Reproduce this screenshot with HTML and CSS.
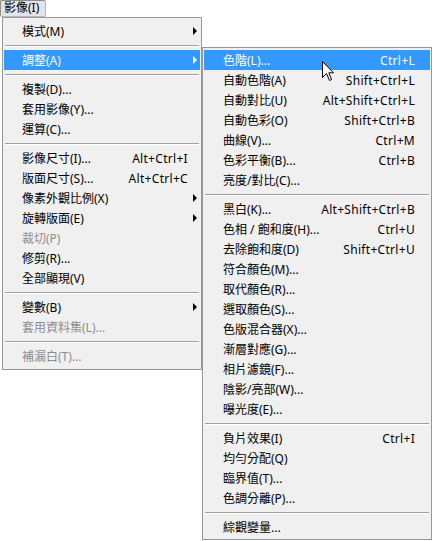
FILE: index.html
```html
<!DOCTYPE html>
<html lang="zh-Hant">
<head>
<meta charset="utf-8">
<title>影像選單</title>
<link rel="stylesheet" href="styles.css">
</head>
<body>
<div class="menubar"><span class="menubtn">影像(I)</span></div>
<div class="menus">
  <div class="menu menu-main">
    <div class="item sub"><span class="lbl">模式(M)</span><span class="key"></span><span class="arr"></span></div>
    <div class="sep"></div>
    <div class="item sub active"><span class="lbl">調整(A)</span><span class="key"></span><span class="arr"></span></div>
    <div class="sep"></div>
    <div class="item"><span class="lbl">複製(D)...</span></div>
    <div class="item"><span class="lbl">套用影像(Y)...</span></div>
    <div class="item"><span class="lbl">運算(C)...</span></div>
    <div class="sep"></div>
    <div class="item"><span class="lbl">影像尺寸(I)...</span><span class="key">Alt+Ctrl+I</span></div>
    <div class="item"><span class="lbl">版面尺寸(S)...</span><span class="key">Alt+Ctrl+C</span></div>
    <div class="item sub"><span class="lbl">像素外觀比例(X)</span><span class="key"></span><span class="arr"></span></div>
    <div class="item sub"><span class="lbl">旋轉版面(E)</span><span class="key"></span><span class="arr"></span></div>
    <div class="item disabled"><span class="lbl">裁切(P)</span></div>
    <div class="item"><span class="lbl">修剪(R)...</span></div>
    <div class="item"><span class="lbl">全部顯現(V)</span></div>
    <div class="sep"></div>
    <div class="item sub"><span class="lbl">變數(B)</span><span class="key"></span><span class="arr"></span></div>
    <div class="item disabled"><span class="lbl">套用資料集(L)...</span></div>
    <div class="sep"></div>
    <div class="item disabled"><span class="lbl">補漏白(T)...</span></div>
  </div>
  <div class="menu menu-sub">
    <div class="item active"><span class="lbl">色階(L)...</span><span class="key">Ctrl+L</span></div>
    <div class="item"><span class="lbl">自動色階(A)</span><span class="key">Shift+Ctrl+L</span></div>
    <div class="item"><span class="lbl">自動對比(U)</span><span class="key">Alt+Shift+Ctrl+L</span></div>
    <div class="item"><span class="lbl">自動色彩(O)</span><span class="key">Shift+Ctrl+B</span></div>
    <div class="item"><span class="lbl">曲線(V)...</span><span class="key">Ctrl+M</span></div>
    <div class="item"><span class="lbl">色彩平衡(B)...</span><span class="key">Ctrl+B</span></div>
    <div class="item"><span class="lbl">亮度/對比(C)...</span></div>
    <div class="sep"></div>
    <div class="item"><span class="lbl">黑白(K)...</span><span class="key">Alt+Shift+Ctrl+B</span></div>
    <div class="item"><span class="lbl">色相 / 飽和度(H)...</span><span class="key">Ctrl+U</span></div>
    <div class="item"><span class="lbl">去除飽和度(D)</span><span class="key">Shift+Ctrl+U</span></div>
    <div class="item"><span class="lbl">符合顏色(M)...</span></div>
    <div class="item"><span class="lbl">取代顏色(R)...</span></div>
    <div class="item"><span class="lbl">選取顏色(S)...</span></div>
    <div class="item"><span class="lbl">色版混合器(X)...</span></div>
    <div class="item"><span class="lbl">漸層對應(G)...</span></div>
    <div class="item"><span class="lbl">相片濾鏡(F)...</span></div>
    <div class="item"><span class="lbl">陰影/亮部(W)...</span></div>
    <div class="item"><span class="lbl">曝光度(E)...</span></div>
    <div class="sep"></div>
    <div class="item"><span class="lbl">負片效果(I)</span><span class="key">Ctrl+I</span></div>
    <div class="item"><span class="lbl">均勻分配(Q)</span></div>
    <div class="item"><span class="lbl">臨界值(T)...</span></div>
    <div class="item"><span class="lbl">色調分離(P)...</span></div>
    <div class="sep"></div>
    <div class="item"><span class="lbl">綜觀變量...</span></div>
  </div>
</div>
<svg class="cursor" width="13" height="21" viewBox="0 0 13 21" aria-hidden="true">
  <path d="M0.5 0.5 L0.5 16.5 L4.5 12.5 L7.5 19.5 L9.5 18.5 L6.8 11.8 L11.5 11.8 Z" fill="#fff" stroke="#000" stroke-width="1" stroke-linejoin="miter"/>
</svg>
</body>
</html>
```

FILE: styles.css
```css
html, body {
  margin: 0;
  padding: 0;
  background: #ffffff;
}

body {
  position: relative;
  width: 432px;
  height: 541px;
  overflow: hidden;
  font-family: "Noto Sans", "Noto Sans CJK TC", sans-serif;
  font-size: 12px;
  color: #000;
}

.menubar {
  height: 17px;
  display: flex;
}

.menubtn {
  box-sizing: border-box;
  width: 46px;
  height: 17px;
  line-height: 14px;
  padding-left: 3px;
  background: #e1e5eb;
  border: 1px solid #8c8c8c;
  border-right-color: #b8b8b8;
  border-bottom-color: #b8b8b8;
  border-radius: 2px;
  white-space: nowrap;
}

.menus {
  display: flex;
  align-items: flex-start;
}

.menu {
  box-sizing: border-box;
  background: #f0f0f0;
  border: 1px solid #979797;
  display: flex;
  flex-direction: column;
}

.menu-main {
  margin-left: 2px;
  width: 200px;
  padding: 3px 1px 3px 1px;
}

.menu-sub {
  margin-top: 30px;
  width: 230px;
  padding: 2px 1px 2px 1px;
}

.item {
  display: flex;
  align-items: center;
  height: 20px;
  white-space: nowrap;
}

.menu-main .item {
  padding-left: 18px;
  padding-right: 12px;
}

.menu-sub .item {
  padding-left: 19px;
  padding-right: 15px;
}

.lbl {
  flex: 1;
}

.key {
  text-align: right;
  letter-spacing: 0.3px;
}

.item.sub {
  position: relative;
}

.arr {
  position: absolute;
  right: 3px;
  top: 6px;
  width: 0;
  height: 0;
  border-top: 4px solid transparent;
  border-bottom: 4px solid transparent;
  border-left: 4px solid #000;
}

.item.active {
  background: #3399ff;
  color: #fff;
}

.item.active .arr {
  border-left-color: #fff;
}

.item.disabled {
  color: #8d8d8d;
}

.sep {
  height: 9px;
  position: relative;
}

.sep::before {
  content: "";
  position: absolute;
  left: 1px;
  right: 1px;
  top: 4px;
  height: 1px;
  background: #a0a0a0;
  box-shadow: 0 1px 0 #ffffff;
}

.cursor {
  position: absolute;
  left: 322px;
  top: 61px;
}
```
